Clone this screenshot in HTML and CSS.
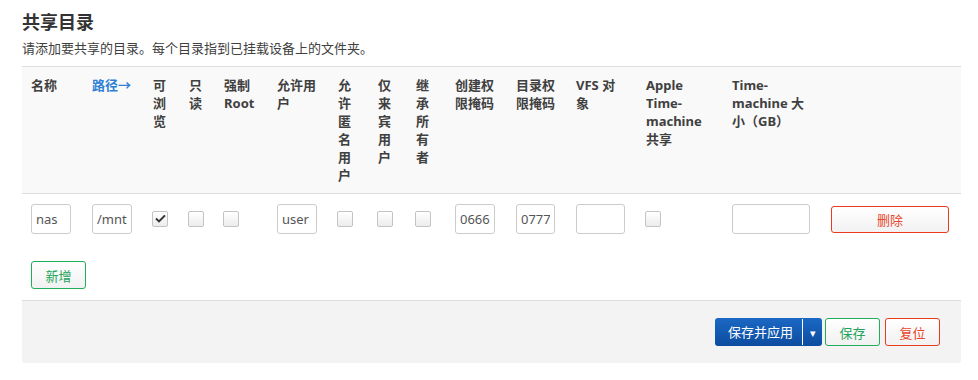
FILE: index.html
```html
<!DOCTYPE html>
<html>
<head>
<meta charset="UTF-8">
<title>共享目录</title>
<link rel="stylesheet" href="styles.css">
</head>
<body>
<div class="seccion">
	<h2 class="titulo">共享目录</h2>
	<div class="descr">请添加要共享的目录。每个目录指到已挂载设备上的文件夹。</div>

	<table class="tabla" cellpadding="0" cellspacing="0">
		<colgroup>
			<col style="width:61px"><col style="width:61px"><col style="width:36px"><col style="width:35px">
			<col style="width:53px"><col style="width:61px"><col style="width:40px"><col style="width:38px">
			<col style="width:39px"><col style="width:61px"><col style="width:60px"><col style="width:70px">
			<col style="width:86px"><col style="width:99px"><col style="width:139px">
		</colgroup>
		<thead>
			<tr class="cabecera">
				<th>名称</th>
				<th class="orden">路径→</th>
				<th>可浏览</th>
				<th>只读</th>
				<th>强制 Root</th>
				<th>允许用户</th>
				<th>允许匿名用户</th>
				<th>仅来宾用户</th>
				<th>继承所有者</th>
				<th>创建权限掩码</th>
				<th>目录权限掩码</th>
				<th>VFS 对象</th>
				<th>Apple Time-machine 共享</th>
				<th>Time-machine 大小（GB）</th>
				<th></th>
			</tr>
		</thead>
		<tbody>
			<tr class="fila">
				<td><input class="campo" type="text" value="nas"></td>
				<td><input class="campo" type="text" value="/mnt"></td>
				<td><span class="caja marcada"><svg width="11" height="9" viewBox="0 0 11 9"><path d="M1 4.6 L4 7.4 L10 1.4" fill="none" stroke="#333" stroke-width="2"/></svg></span></td>
				<td><span class="caja"></span></td>
				<td><span class="caja"></span></td>
				<td><input class="campo" type="text" value="user"></td>
				<td><span class="caja"></span></td>
				<td><span class="caja"></span></td>
				<td><span class="caja"></span></td>
				<td><input class="campo" type="text" value="0666"></td>
				<td><input class="campo" type="text" value="0777"></td>
				<td><input class="campo" type="text" value=""></td>
				<td><span class="caja"></span></td>
				<td><input class="campo" type="text" value=""></td>
				<td><button class="boton rojo borrar">删除</button></td>
			</tr>
		</tbody>
	</table>

	<div class="agregar">
		<button class="boton verde nuevo">新增</button>
	</div>

	<div class="pie">
		<div class="aplicar">
			<span class="aplicar_txt">保存并应用</span><span class="aplicar_menu">▾</span>
		</div>
		<button class="boton verde">保存</button>
		<button class="boton rojo">复位</button>
	</div>
</div>
</body>
</html>
```

FILE: styles.css
```css
body {
	margin: 0;
	background: #fff;
	font-family: "Noto Sans", "Noto Sans CJK SC", sans-serif;
	color: #404040;
}
.seccion {
	width: 939px;
	margin-left: 22px;
}
.titulo {
	margin: 0;
	padding-top: 10px;
	font-size: 18px;
	line-height: 24px;
	font-weight: bold;
	color: #333;
}
.descr {
	margin-top: 5px;
	font-size: 13px;
	line-height: 18px;
	height: 27px;
}
.tabla {
	width: 939px;
	table-layout: fixed;
	border-collapse: collapse;
}
.cabecera {
	background-color: #f9f9f9;
	border-top: 1px solid #ddd;
	border-bottom: 1px solid #ddd;
}
.cabecera th {
	text-align: left;
	vertical-align: top;
	padding: 9px;
	font-size: 13px;
	line-height: 18px;
	font-weight: bold;
	color: #404040;
	word-wrap: break-word;
}
.cabecera th.orden {
	color: #2f7fd4;
}
.fila td {
	padding: 10px 9px;
	vertical-align: middle;
	height: 30px;
}
.campo {
	box-sizing: border-box;
	width: calc(100% - 3px);
	height: 30px;
	padding: 0 4px;
	border: 1px solid #ccc;
	border-radius: 3px;
	font-family: "Noto Sans", sans-serif;
	font-size: 13px;
	color: #555;
	background: #fff;
}
.caja {
	display: inline-flex;
	align-items: center;
	justify-content: center;
	box-sizing: border-box;
	width: 16px;
	height: 16px;
	margin-left: -1px;
	border: 1px solid #c4c4c4;
	border-radius: 2px;
	background: linear-gradient(#fff, #ececec);
	vertical-align: middle;
	position: relative;
	top: -2px;
}
.boton {
	box-sizing: border-box;
	height: 28px;
	padding: 0;
	border-radius: 3px;
	border: 1px solid #ccc;
	background: linear-gradient(#fff, #f1f1f1);
	font-family: "Noto Sans CJK SC", sans-serif;
	font-size: 13px;
	cursor: pointer;
	width: 55px;
}
.verde {
	border-color: #1fae5a;
	color: #22a45a;
}
.rojo {
	border-color: #ec3a1e;
	color: #e8482e;
}
.borrar {
	width: 118px;
	height: 27px;
}
.agregar {
	padding: 17px 9px 11px;
}
.pie {
	display: flex;
	justify-content: flex-end;
	align-items: center;
	gap: 3px;
	height: 63px;
	box-sizing: border-box;
	padding: 0 21px 0 0;
	background-color: #f3f3f3;
	border-top: 1px solid #ddd;
	border-radius: 0 0 3px 3px;
}
.pie .boton:last-child {
	margin-left: 2px;
}
.aplicar {
	display: flex;
	height: 28px;
	border-radius: 3px;
	background: linear-gradient(#1b68c4, #0d4c9f);
	color: #fff;
	font-family: "Noto Sans CJK SC", sans-serif;
	font-size: 13px;
	line-height: 28px;
}
.aplicar_txt {
	width: 87px;
	text-align: center;
	padding-left: 4px;
	box-sizing: border-box;
}
.aplicar_menu {
	width: 20px;
	text-align: center;
	border-left: 1px solid #fff;
	box-sizing: border-box;
	font-size: 11px;
	margin: 1px 0;
	line-height: 26px;
}
```
